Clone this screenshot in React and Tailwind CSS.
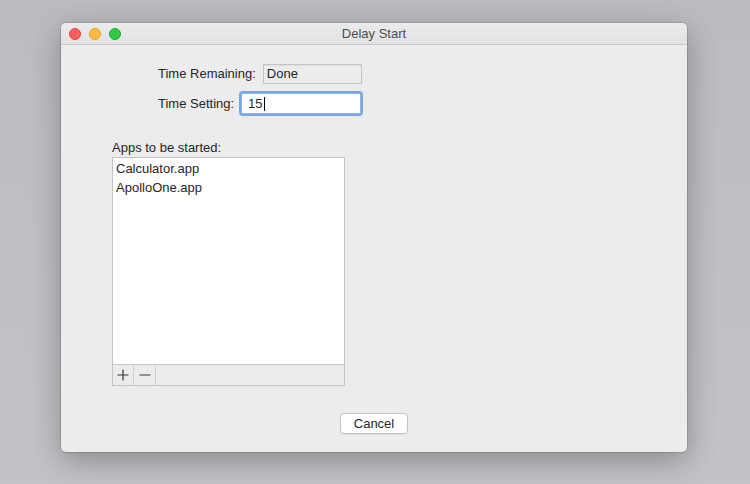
import React from "react";

/*
 * Delay Start — macOS-Fenster: Zeitfelder, App-Liste mit +/−, Abbrechen.
 */
function TrafficLights() {
  return (
    <div className="flex items-center gap-[8px]">
      <span className="h-[12px] w-[12px] rounded-full border border-[#e0443e] bg-[#fc605c]" />
      <span className="h-[12px] w-[12px] rounded-full border border-[#dea123] bg-[#fdbc40]" />
      <span className="h-[12px] w-[12px] rounded-full border border-[#1aab29] bg-[#34c84a]" />
    </div>
  );
}

function PlusIcon() {
  return (
    <svg width="12" height="12" viewBox="0 0 12 12" stroke="#333" strokeWidth="1.2">
      <path d="M6 0.5v11M0.5 6h11" />
    </svg>
  );
}

function MinusIcon() {
  return (
    <svg width="12" height="12" viewBox="0 0 12 12" stroke="#333" strokeWidth="1.2">
      <path d="M0.5 6h11" />
    </svg>
  );
}

export default function App() {
  const apps = ["Calculator.app", "ApolloOne.app"];

  return (
    <div
      className="h-[484px] w-[750px] overflow-hidden bg-gradient-to-b from-[#bcbbc1] to-[#c3c2c6] pl-[61px] pt-[23px] text-[13px] text-[#262626]"
      style={{ fontFamily: '"Liberation Sans", Arial, sans-serif' }}
    >
      <div className="flex h-[429px] w-[626px] flex-col overflow-hidden rounded-[5px] bg-[#ececec] shadow-[0_8px_30px_rgba(0,0,0,0.3),0_0_0_1px_rgba(0,0,0,0.12)]">
        {/* Titelleiste */}
        <div className="relative flex h-[22px] shrink-0 items-center border-b border-[#c8c8c8] bg-gradient-to-b from-[#ebebeb] to-[#e2e2e2] pl-[8px]">
          <TrafficLights />
          <div className="absolute inset-x-0 text-center text-[13px] text-[#4d4d4d]">Delay Start</div>
        </div>

        {/* Inhalt */}
        <div className="flex flex-1 flex-col pl-[51px] pt-[19px]">
          <div className="flex items-center pl-[46px]">
            <span>Time Remaining:</span>
            <div className="ml-[7px] flex h-[20px] w-[99px] items-center border border-[#c4c4c4] bg-[#ececec] pl-[3px] shadow-[inset_0_1px_0_rgba(0,0,0,0.05)]">
              Done
            </div>
          </div>
          <div className="mt-[9px] flex items-center pl-[46px]">
            <span>Time Setting:</span>
            <div className="ml-[7px] flex h-[21px] w-[120px] items-center rounded-[2px] border border-[#8fb5e8] bg-white pl-[6px] shadow-[0_0_0_2px_#7aa7e4]">
              15<span className="ml-[1px] inline-block h-[14px] w-px bg-black" />
            </div>
          </div>

          <div className="mt-[26px] leading-[16px]">Apps to be started:</div>
          <div className="mt-[1px] flex h-[229px] w-[233px] flex-col border border-[#c4c4c4] bg-white">
            <div className="flex-1 pl-[3px] pt-[1px]">
              {apps.map((a) => (
                <div key={a} className="h-[19px] leading-[19px]">{a}</div>
              ))}
            </div>
            <div className="flex h-[21px] border-t border-[#c8c8c8] bg-[#ececec]">
              <div className="flex w-[21px] items-center justify-center border-r border-[#cfcfcf]"><PlusIcon /></div>
              <div className="flex w-[22px] items-center justify-center border-r border-[#cfcfcf]"><MinusIcon /></div>
            </div>
          </div>

          <div className="ml-[-51px] mt-[27px] flex justify-center">
            <button className="h-[21px] w-[68px] rounded-[4px] border border-[#c3c3c3] bg-white text-[13px] leading-none text-[#262626] shadow-[0_1px_0_rgba(0,0,0,0.06)]">
              Cancel
            </button>
          </div>
        </div>
      </div>
    </div>
  );
}
